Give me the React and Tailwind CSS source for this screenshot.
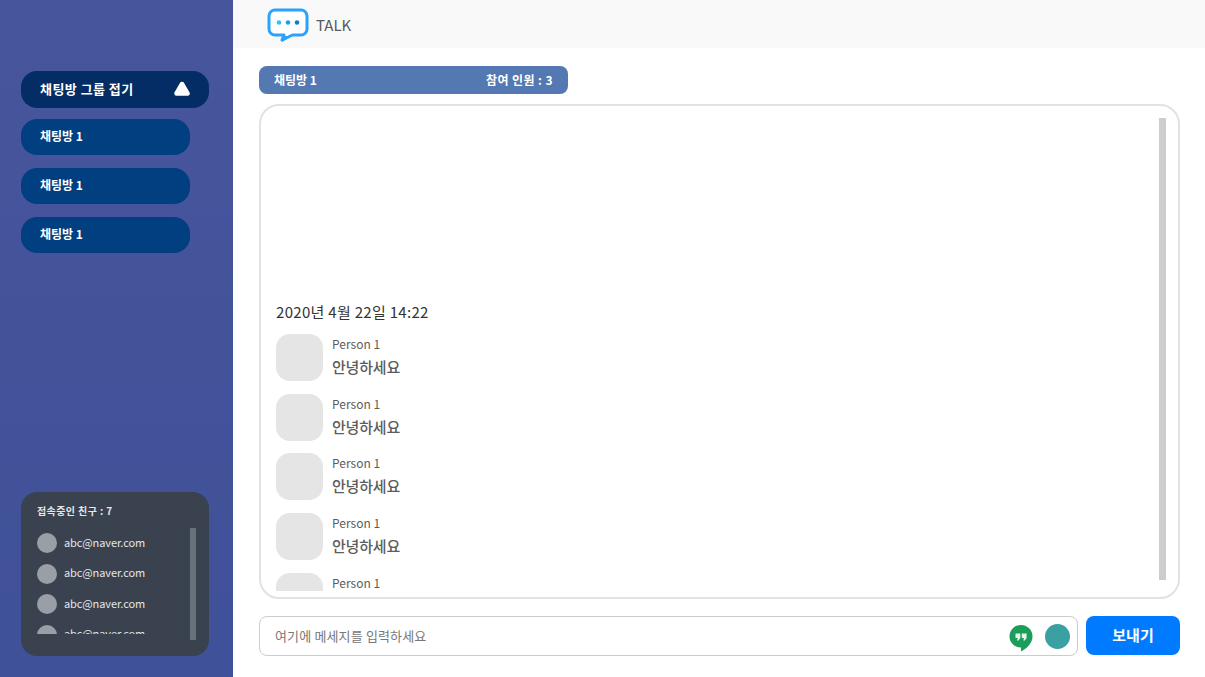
const font = { fontFamily: '"Noto Sans CJK KR", "Noto Sans", sans-serif' };

function Logo() {
  return (
    <svg width="42" height="35" viewBox="0 0 42 35" fill="none">
      <path d="M8 2h26a6 6 0 0 1 6 6v13a6 6 0 0 1-6 6H25.500L15 32l2-5H8a6 6 0 0 1-6-6V8a6 6 0 0 1 6-6z" fill="#fff" stroke="#2aa3ff" strokeWidth="3" strokeLinejoin="round" />
      <path d="M15 28h10l-10 6 1.500-6z" fill="#2aa3ff" />
      <circle cx="12" cy="14.500" r="2.300" fill="#35c0f5" />
      <circle cx="21" cy="14.500" r="2.300" fill="#1ca0ee" />
      <circle cx="30" cy="14.500" r="2.300" fill="#0a7fd0" />
    </svg>
  );
}

function Hangouts() {
  return (
    <svg width="24" height="28" viewBox="0 0 24 28">
      <path d="M12 1a11.500 11.500 0 0 0-11.500 11.500C.5 18.800 5.700 23.500 12 23.500V27.500c6-3 11.500-8.500 11.500-15A11.500 11.500 0 0 0 12 1z" fill="#1c9e5b" />
      <path d="M6.500 9.500h4.800v4.500l-1.800 2.500H8l.7-2.500H6.500zM12.800 9.500h4.800v4.500l-1.800 2.500h-1.500l.7-2.500h-2.200z" fill="#e6f2ea" />
    </svg>
  );
}

function Room() {
  return (
    <div className="w-[169px] h-[36.500px] rounded-[16px] bg-[#023f80] flex items-center pl-[19px] pb-[1px] text-white text-[12px] font-bold">
      채팅방 1
    </div>
  );
}

function Friend() {
  return (
    <div className="flex items-center h-[20px] shrink-0">
      <div className="w-[20px] h-[20px] rounded-full bg-[#9a9ea6] shrink-0" />
      <span className="ml-[7px] text-[11px] text-[#e4e6e8] leading-none -mt-[2px] tracking-[-0.1px]">abc@naver.com</span>
    </div>
  );
}

function Message() {
  return (
    <div className="flex shrink-0 h-[47px]">
      <div className="w-[47px] h-[47px] rounded-[14px] bg-[#e5e5e5] shrink-0" />
      <div className="ml-[9px] flex flex-col">
        <span className="text-[12px] leading-[16px] text-[#5c5c5c] mt-[2px]">Person 1</span>
        <span className="text-[15px] leading-[20px] font-medium text-[#5c5c5c] mt-[5px] tracking-[-0.2px]">안녕하세요</span>
      </div>
    </div>
  );
}

export default function App() {
  return (
    <div style={font} className="flex w-[1205px] h-[677px] overflow-hidden bg-white">
      <aside className="w-[233px] shrink-0 bg-gradient-to-b from-[#47559c] to-[#3f5199] flex flex-col pl-[21px] pt-[71px] pb-[21px]">
        <div className="w-[188px] h-[36.500px] rounded-[16px] bg-[#032d64] flex items-center justify-between pl-[19px] pr-[18px] text-white text-[13px] font-bold">
          <span className="tracking-[0.45px] -mt-[1px]">채팅방 그룹 접기</span>
          <svg width="18" height="16" viewBox="0 0 18 16">
            <path d="M9 3 L14.500 12.500 H3.500 Z" fill="#fff" stroke="#fff" strokeWidth="4.500" strokeLinejoin="round" />
          </svg>
        </div>
        <div className="flex flex-col gap-[12.500px] mt-[11px]">
          <Room />
          <Room />
          <Room />
        </div>
        <div className="mt-auto w-[188px] h-[164px] rounded-[16px] bg-[#39424e] flex pl-[16px] pt-[11px]">
          <div className="w-[153px]">
            <div className="text-[10px] leading-[16px] font-bold text-[#e4e6e8] tracking-[0.4px]">접속중인 친구 : 7</div>
            <div className="mt-[14px] h-[101px] overflow-hidden flex flex-col gap-[10.500px]">
              <Friend />
              <Friend />
              <Friend />
              <Friend />
            </div>
          </div>
          <div className="w-[6px] h-[112px] mt-[25px] bg-[#66717a]" />
        </div>
      </aside>

      <main className="flex-1 flex flex-col">
        <header className="h-[48px] bg-[#f9f9f9] flex items-center pl-[34px] shrink-0">
          <div className="mt-[2px]"><Logo /></div>
          <span className="ml-[7px] mt-[2px] text-[15px] text-[#555b62]">TALK</span>
        </header>

        <div className="flex-1 flex flex-col pl-[26px] pr-[25px] pt-[18px]">
          <div className="w-[309px] h-[28px] rounded-[8px] bg-[#5378b2] flex items-center justify-between px-[15px] text-white text-[12px] font-bold">
            <span>채팅방 1</span>
            <span className="tracking-[0.4px]">참여 인원 : 3</span>
          </div>

          <div className="mt-[10px] h-[495px] rounded-[20px] border-2 border-[#e2e2e2] flex pl-[15px] pt-[12px]">
            <div className="flex-1 h-[473px] overflow-hidden flex flex-col">
              <div className="mt-[184px] text-[15px] leading-[20px] text-[#333] tracking-[0.3px]">2020년 4월 22일 14:22</div>
              <div className="mt-[12px] flex flex-col gap-[12.700px]">
                <Message />
                <Message />
                <Message />
                <Message />
                <Message />
              </div>
            </div>
            <div className="w-[7px] h-[462px] bg-[#cdcdcd] mr-[12px] shrink-0" />
          </div>

          <div className="mt-[17px] flex gap-[8px]">
            <div className="w-[819px] h-[40px] rounded-[8px] border border-[#cccccc] flex items-center pl-[15px] pr-[7px]">
              <span className="text-[13px] text-[#777] tracking-[0.15px]">여기에 메세지를 입력하세요</span>
              <div className="ml-auto mt-[3px]"><Hangouts /></div>
              <div className="ml-[12px] w-[25px] h-[25px] rounded-full bg-[#3aa0a2]" />
            </div>
            <div className="w-[94px] h-[39px] rounded-[8px] bg-[#007bff] flex items-center justify-center text-white text-[15px] font-bold">
              보내기
            </div>
          </div>
        </div>
      </main>
    </div>
  );
}
